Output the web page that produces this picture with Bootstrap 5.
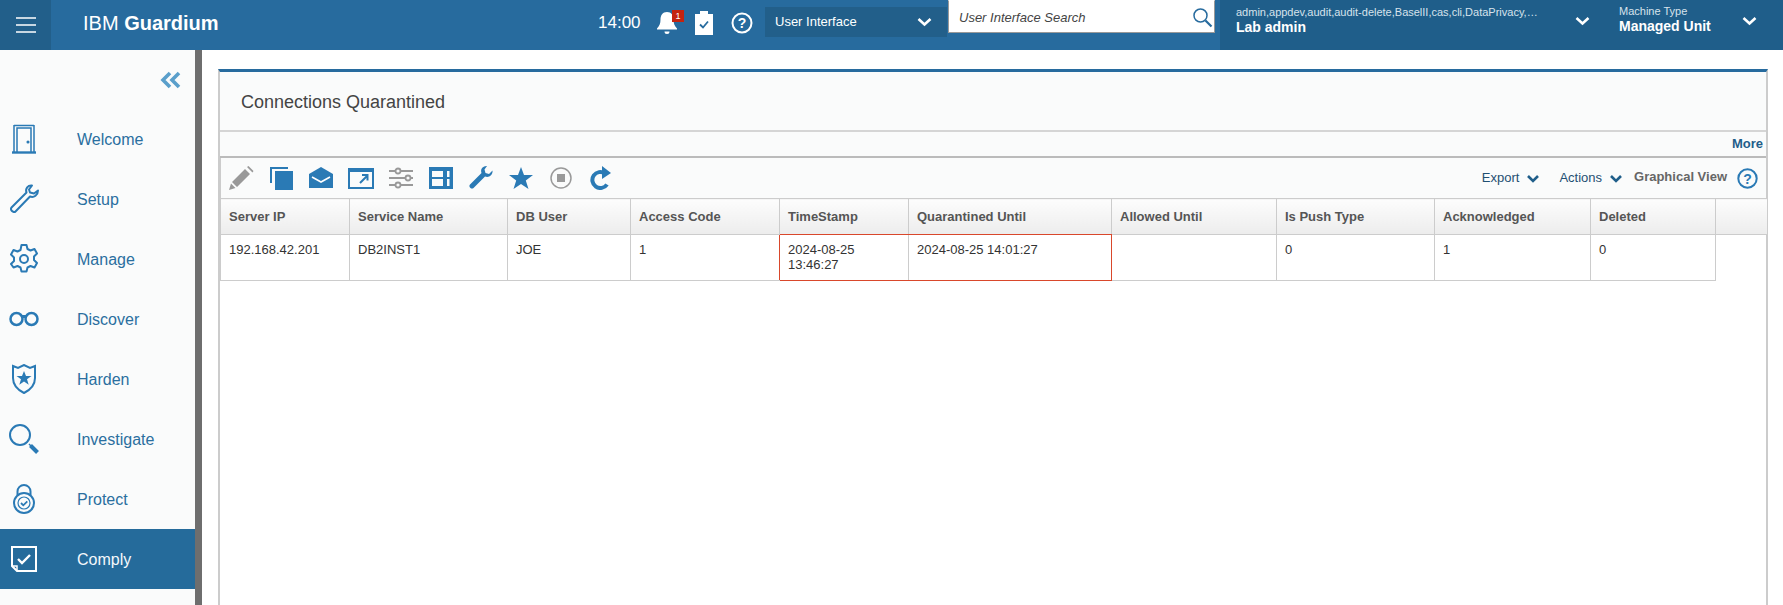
<!DOCTYPE html>
<html lang="en">
<head>
  <meta charset="UTF-8">
  <meta name="viewport" content="width=device-width, initial-scale=1">
  <title>IBM Guardium | Connections Quarantined</title>
  <link href="https://cdn.jsdelivr.net/npm/bootstrap@5.3.0/dist/css/bootstrap.min.css" rel="stylesheet">
  <style>
    html, body { height: 100%; overflow: hidden; }
    body { font-family: "Liberation Sans", Arial, sans-serif; font-size: 13px; color: #333; background: #fff; }
    .top-bar { height: 50px; background: #276b9e; color: #fff; }
    .burger { width: 51px; background: #225f8a; }
    .brand { width: 547px; padding-left: 32px; font-size: 20px; padding-bottom: 5px; }
    .clock { width: 58px; font-size: 17px; padding-bottom: 4px; }
    .top-icons { width: 109px; padding-bottom: 4px; }
    .bell-wrap { width: 24px; height: 24px; margin-left: -1px; }
    .bell-count { top: -1px; right: -5px; width: 12px; height: 12px; background: #c4230f; font-size: 9px; line-height: 12px; }
    .help-top { margin-left: 2px; }
    .ui-select { width: 182px; height: 30px; margin-top: 7px; padding: 0 15px 0 10px; background: #225f8a; }
    .ui-search { width: 267px; height: 33px; margin: 0 5px 0 1px; padding: 1px 1px 0 10px; background: #fff; border: 1px solid #999; border-top-color: #fff; }
    .ui-search input { border: 0; outline: 0; padding: 0; font: italic 13px "Liberation Sans", Arial, sans-serif; }
    .ui-search input::placeholder { color: #444; opacity: 1; }
    .user-box { background: #1f5e8a; height: 50px; padding: 0 26px 8px 16px; }
    .user-roles { width: 382px; padding-left: 16px; padding-right: 11px; border-right: 1px solid #184e75; margin-right: -1px; }
    .machine-box { padding-left: 18px; }
    .machine-box > div { margin-top: -3px; }
    .tiny-line { font-size: 11px; line-height: 13px; color: #d7e3ec; }
    .strong-line { font-size: 14px; line-height: 17px; font-weight: 700; }
    .side-menu { width: 195px; background: #fafbfb; flex: none; }
    .side-grip { width: 7px; background: #6e6e6e; flex: none; }
    .collapse-row { height: 59px; padding: 21px 13px 0 0; }
    .side-link { height: 60px; color: #2a6f9f; font-size: 16px; padding: 0 0 0 9px; }
    .side-link:hover { color: #2a6f9f; }
    .side-link svg { margin-right: 39px; flex: none; }
    .side-link span { margin-top: 2px; margin-left: -1px; }
    .side-link.current { background: #256b9b; color: #f4f8fb; }
    .work-area { padding: 19px 15px 0 16px; min-width: 0; }
    .report-panel { height: 540px; border: 0; border-radius: 0; border-top: 3px solid #276b9e; border-left: 2px solid #ccc; border-right: 2px solid #ccc; --bs-card-bg: #fff; }
    .report-title { height: 60px; padding: 2px 21px 0; background: #fafbfb; border-bottom: 2px solid #d5d5d5; border-radius: 0 !important; font-size: 18px; color: #444; }
    .more-row { height: 26px; background: #fafbfb; padding-right: 3px; border-bottom: 2px solid #bbb; }
    .more-row a { color: #1f5e8a; font-weight: 700; text-decoration: none; }
    .tool-row { height: 40px; background: #fafbfb; padding: 0 8px 0 7px; border-left: 1px solid #ccc; }
    .tool-row > .tool-icons { gap: 14px; }
    .drop-link { color: #1f4f72; }
    .export-link { margin-right: 20px; }
    .graph-link { color: #666; font-weight: 700; margin: 0 10px 3px 12px; }
    .quarantine-table { table-layout: fixed; width: 1547px; margin: 0; border-collapse: collapse; --bs-table-bg: transparent; }
    .quarantine-table th { height: 36px; padding: 0 8px; vertical-align: middle; font-weight: 700; color: #555; background: linear-gradient(#fdfdfd, #ececec); border: 1px solid #ccc; }
    .quarantine-table td { height: 46px; padding: 7px 8px 0; vertical-align: top; line-height: 15px; color: #333; border: 1px solid #ccc; }
    .quarantine-table td.spare-cell { border: 0; }
    /* collapsed borders: neighbours have to carry the red too */
    .quarantine-table th.box-top { border-bottom: 1px solid #d9472b; }
    .quarantine-table td.box-before { border-right: 1px solid #d9472b; }
    .quarantine-table td.box-start { border-left: 1px solid #d9472b; border-top: 1px solid #d9472b; border-bottom: 1px solid #d9472b; }
    .quarantine-table td.box-end { border-left: 1px solid #ccc; border-right: 1px solid #d9472b; border-top: 1px solid #d9472b; border-bottom: 1px solid #d9472b; }
  </style>
</head>
<body>
  <header class="top-bar d-flex">
    <div class="burger d-flex align-items-center justify-content-center">
      <svg width="20" height="18" viewBox="0 0 20 18"><path d="M0 2h20M0 9h20M0 16h20" stroke="#fff" stroke-width="1.6"/></svg>
    </div>
    <div class="brand d-flex align-items-center"><span><span class="fw-light">IBM</span> <b>Guardium</b></span></div>
    <div class="clock d-flex align-items-center">14:00</div>
    <div class="top-icons d-flex align-items-center gap-3">
      <div class="bell-wrap position-relative">
        <svg width="24" height="24" viewBox="0 0 24 24"><path fill="#fff" d="M12 1c4.500 0 6.500 3.500 6.500 7.500 0 4 1 6.500 3.500 9v1H2v-1c2.500-2.500 3.500-5 3.500-9C5.500 4.500 7.500 1 12 1zM9.500 20.500h5a2.500 2.500 0 0 1-5 0z"/></svg>
        <span class="bell-count position-absolute text-center text-white">1</span>
      </div>
      <svg width="18" height="24" viewBox="0 0 18 24"><path fill="#fff" d="M0 3h5V0h8v3h5v21H0z"/><path fill="none" stroke="#276b9e" stroke-width="1.800" d="M5 13.500l3 3 5-6"/></svg>
      <svg class="help-top" width="22" height="22" viewBox="0 0 22 22"><circle cx="11" cy="11" r="9.500" fill="none" stroke="#fff" stroke-width="2"/><text x="11" y="16" text-anchor="middle" font-family="Liberation Sans" font-size="14" font-weight="700" fill="#fff">?</text></svg>
    </div>
    <div class="ui-select d-flex align-items-center justify-content-between">
      <span>User Interface</span>
      <svg width="15" height="10" viewBox="0 0 15 10"><path d="M1.500 2l6 5.500 6-5.500" fill="none" stroke="#fff" stroke-width="2.600"/></svg>
    </div>
    <div class="ui-search d-flex align-items-center">
      <input class="flex-grow-1 bg-transparent" type="text" placeholder="User Interface Search">
      <svg width="21" height="21" viewBox="0 0 21 21"><circle cx="8.500" cy="8.500" r="6.500" fill="none" stroke="#276b9e" stroke-width="1.500"/><path d="M13.500 13.500l6 6" stroke="#276b9e" stroke-width="2.200"/></svg>
    </div>
    <div class="user-box user-roles d-flex align-items-center justify-content-between">
      <div>
        <div class="tiny-line">admin,appdev,audit,audit-delete,BaselII,cas,cli,DataPrivacy,…</div>
        <div class="strong-line">Lab admin</div>
      </div>
      <svg width="15" height="10" viewBox="0 0 15 10"><path d="M1.500 2l6 5.500 6-5.500" fill="none" stroke="#fff" stroke-width="2.600"/></svg>
    </div>
    <div class="user-box machine-box flex-grow-1 d-flex align-items-center justify-content-between">
      <div>
        <div class="tiny-line">Machine Type</div>
        <div class="strong-line">Managed Unit</div>
      </div>
      <svg width="15" height="10" viewBox="0 0 15 10"><path d="M1.500 2l6 5.500 6-5.500" fill="none" stroke="#fff" stroke-width="2.600"/></svg>
    </div>
  </header>

  <div class="d-flex" style="height: 555px">
    <aside class="side-menu">
      <div class="collapse-row d-flex justify-content-end align-items-start">
        <svg width="22" height="18" viewBox="0 0 22 18"><path d="M10 2L3 9l7 7M19 2l-7 7 7 7" fill="none" stroke="#5a9fcb" stroke-width="3.600"/></svg>
      </div>
      <nav class="nav flex-column">
        <a class="nav-link side-link d-flex align-items-center" href="#">
          <svg width="30" height="30" viewBox="0 0 30 30" fill="none" stroke="#2a7ab5" stroke-width="1.500"><path d="M5 1v27M25 1v27M5 1.500h20M8 28V4h14v24"/><path d="M3 28.500h24" stroke-width="2.400"/><circle cx="19" cy="18" r=".8" fill="#2a7ab5"/></svg>
          <span>Welcome</span></a>
        <a class="nav-link side-link d-flex align-items-center" href="#">
          <svg width="30" height="30" viewBox="0 0 30 30" fill="none" stroke="#2a7ab5" stroke-width="2"><path d="M23 1.500c-4-.5-7 3-5.500 7L2.500 23.500c-2 2 2 6 4 4L21 12.500c4 1.500 8-1.500 8-6l-4 3-4-1-1-3z" stroke-linejoin="round"/></svg>
          <span>Setup</span></a>
        <a class="nav-link side-link d-flex align-items-center" href="#">
          <svg width="30" height="30" viewBox="0 0 30 30" fill="none" stroke="#2a7ab5" stroke-width="2"><path stroke-linejoin="round" d="M12.500 1h5l1 4 3 1.500 4-1.500 2.500 4.500-3 3v3.500l3 3-2.500 4.500-4-1.500-3 1.500-1 4h-5l-1-4-3-1.500-4 1.500L2 20l3-3v-3.500l-3-3L4.500 6l4 1.500 3-1.500z"/><circle cx="15" cy="15" r="4"/></svg>
          <span>Manage</span></a>
        <a class="nav-link side-link d-flex align-items-center" href="#">
          <svg width="30" height="30" viewBox="0 0 30 30" fill="none" stroke="#2a7ab5" stroke-width="2.500"><circle cx="7.500" cy="15" r="6"/><circle cx="22.500" cy="15" r="6"/><path d="M13 12.500h4" stroke-width="3"/></svg>
          <span>Discover</span></a>
        <a class="nav-link side-link d-flex align-items-center" href="#">
          <svg width="30" height="30" viewBox="0 0 30 30"><path fill="none" stroke="#2a7ab5" stroke-width="2" d="M4 2l5 2 6-3 6 3 5-2v12c0 7-5 12-11 15C9 26 4 21 4 14z"/><path fill="#2a7ab5" d="M15 7l2 5h5.500l-4.500 3.300 1.700 5.500-4.700-3.300-4.700 3.300 1.700-5.500L7.500 12H13z"/></svg>
          <span>Harden</span></a>
        <a class="nav-link side-link d-flex align-items-center" href="#">
          <svg width="30" height="30" viewBox="0 0 30 30" fill="none" stroke="#2a7ab5"><circle cx="11" cy="11" r="10" stroke-width="2"/><path d="M20 20l2 2" stroke-width="1.500"/><path d="M21.500 21.500l7 7" stroke-width="4"/></svg>
          <span>Investigate</span></a>
        <a class="nav-link side-link d-flex align-items-center" href="#">
          <svg width="30" height="30" viewBox="0 0 30 30" fill="none" stroke="#2a7ab5" stroke-width="2"><path d="M8.500 11V7.500a6.500 6.500 0 0 1 13 0V11"/><circle cx="15" cy="19" r="10"/><circle cx="15" cy="19" r="6" stroke-width="1.200"/><path d="M12 19l2.300 2.300 4-4" stroke-width="1.800"/></svg>
          <span>Protect</span></a>
        <a class="nav-link side-link current d-flex align-items-center" href="#">
          <svg width="30" height="30" viewBox="0 0 30 30" fill="none" stroke="#fff"><path stroke-width="2" d="M3 22V3h24v24H8z"/><path stroke-width="1.500" d="M3 22h5v5"/><path stroke-width="2.400" d="M9 15l4 4 8-8"/></svg>
          <span>Comply</span></a>
      </nav>
    </aside>
    <div class="side-grip"></div>

    <main class="work-area flex-grow-1">
      <section class="card report-panel">
        <div class="card-header report-title d-flex align-items-center">Connections Quarantined</div>
        <div class="more-row d-flex align-items-center justify-content-end"><a href="#">More</a></div>
        <div class="tool-row d-flex align-items-center justify-content-between">
          <div class="tool-icons d-flex align-items-center">
            <svg width="26" height="24" viewBox="0 0 26 24"><path fill="#999" d="M17 3l5 5L9 21l-5-5zM19 1l1.500-1 5 5-1 1.500zM3 17.500l4.500 4.500L1 24z"/></svg>
            <svg width="26" height="24" viewBox="0 0 26 24"><path fill="#2a7ab5" d="M7 5h18v19H7z"/><path fill="#2a7ab5" d="M2 1h18v2H4v14H2z"/></svg>
            <svg width="26" height="24" viewBox="0 0 26 24"><path fill="#2a7ab5" d="M13 1l12 7v14H1V8z"/><path fill="none" stroke="#fff" stroke-width="1.600" d="M4 11l9 5 9-5"/></svg>
            <svg width="26" height="24" viewBox="0 0 26 24" fill="none" stroke="#2a7ab5"><path stroke-width="2" d="M1 3h24v19H1z"/><path stroke-width="4" d="M1 4h24"/><path stroke-width="2" d="M12 17l7-7M14 9h5.500v5.500"/></svg>
            <svg width="26" height="24" viewBox="0 0 26 24" fill="none" stroke="#999" stroke-width="1.800"><path d="M1 5h6M13 5h12M1 12h16M23 12h2M1 19h6M13 19h12"/><circle cx="10" cy="5" r="2.500"/><circle cx="20" cy="12" r="2.500"/><circle cx="10" cy="19" r="2.500"/></svg>
            <svg width="26" height="24" viewBox="0 0 26 24"><path fill="#2a7ab5" d="M1 1h24v22H1z"/><path fill="#fafbfb" d="M4 5h11v6H4zM4 13h11v7H4zM19 5h2.500v6H19zM19 13h2.500v7H19z"/></svg>
            <svg width="26" height="24" viewBox="0 0 26 24"><path fill="#2a7ab5" d="M19 0c-4-.2-7 3-5.500 7L2 18.500c-2 2 1.500 5.500 3.500 3.500L17 10.500c4 1.500 8-1.500 7.500-6L21 8l-3.500-1-1-3.500z"/></svg>
            <svg width="26" height="24" viewBox="0 0 26 24"><path fill="#2a7ab5" d="M13 1l3 8h9l-7.200 5.500L20.500 23 13 18l-7.500 5 2.700-8.500L1 9h9z"/></svg>
            <svg width="26" height="24" viewBox="0 0 26 24"><circle cx="13" cy="12" r="10" fill="none" stroke="#999" stroke-width="1.500"/><path fill="#999" d="M9 8h8v8H9z"/></svg>
            <svg width="26" height="24" viewBox="0 0 26 24"><path fill="none" stroke="#2a7ab5" stroke-width="4" d="M17 7.500a8 8 0 1 0 2 11"/><path fill="#2a7ab5" d="M14 0l9 7-9 6z"/></svg>
          </div>
          <div class="d-flex align-items-center">
            <a class="drop-link export-link d-flex align-items-center gap-2 text-decoration-none" href="#">Export
              <svg width="12" height="9" viewBox="0 0 12 9"><path d="M1 2l5 5 5-5" fill="none" stroke="#1f5e8a" stroke-width="2.600"/></svg></a>
            <a class="drop-link d-flex align-items-center gap-2 text-decoration-none" href="#">Actions
              <svg width="12" height="9" viewBox="0 0 12 9"><path d="M1 2l5 5 5-5" fill="none" stroke="#1f5e8a" stroke-width="2.600"/></svg></a>
            <span class="graph-link">Graphical View</span>
            <svg width="21" height="21" viewBox="0 0 21 21"><circle cx="10.500" cy="10.500" r="9.200" fill="none" stroke="#2a7ab5" stroke-width="2"/><text x="10.500" y="15.500" text-anchor="middle" font-family="Liberation Sans" font-size="14" font-weight="700" fill="#2a7ab5">?</text></svg>
          </div>
        </div>
        <table class="table quarantine-table">
          <colgroup>
            <col width="129"><col width="158"><col width="123"><col width="149"><col width="129"><col width="203"><col width="165"><col width="158"><col width="156"><col width="125"><col width="52">
          </colgroup>
          <thead>
            <tr>
              <th>Server IP</th><th>Service Name</th><th>DB User</th><th>Access Code</th><th class="box-top">TimeStamp</th><th class="box-top">Quarantined Until</th><th>Allowed Until</th><th>Is Push Type</th><th>Acknowledged</th><th>Deleted</th><th></th>
            </tr>
          </thead>
          <tbody>
            <tr>
              <td>192.168.42.201</td><td>DB2INST1</td><td>JOE</td><td class="box-before">1</td>
              <td class="box-start">2024-08-25 13:46:27</td><td class="box-end">2024-08-25 14:01:27</td>
              <td></td><td>0</td><td>1</td><td>0</td><td class="spare-cell"></td>
            </tr>
          </tbody>
        </table>
      </section>
    </main>
  </div>
</body>
</html>
